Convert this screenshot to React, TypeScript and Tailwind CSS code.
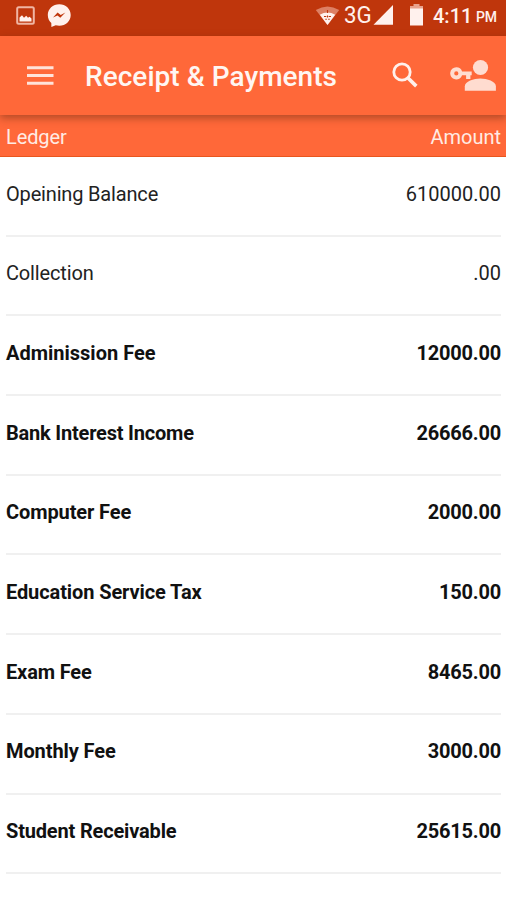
const rows = [
  { ledger: "Opeining Balance", amount: "610000.00", bold: false, tracking: "tracking-[-0.17px]" },
  { ledger: "Collection", amount: ".00", bold: false, tracking: "tracking-[-0.15px]" },
  { ledger: "Adminission Fee", amount: "12000.00", bold: true, tracking: "tracking-normal" },
  { ledger: "Bank Interest Income", amount: "26666.00", bold: true, tracking: "tracking-[-0.2px]" },
  { ledger: "Computer Fee", amount: "2000.00", bold: true, tracking: "tracking-[-0.1px]" },
  { ledger: "Education Service Tax", amount: "150.00", bold: true, tracking: "tracking-[-0.1px]" },
  { ledger: "Exam Fee", amount: "8465.00", bold: true, tracking: "tracking-[-0.15px]" },
  { ledger: "Monthly Fee", amount: "3000.00", bold: true, tracking: "tracking-[-0.1px]" },
  { ledger: "Student Receivable", amount: "25615.00", bold: true, tracking: "tracking-[-0.17px]" },
];

function StatusBar() {
  return (
    <div className="flex h-9 items-start bg-[#bf360c] text-[#fff1ed]">
      <svg className="ml-4 mt-[6px] h-[19px] w-[19px]" viewBox="0 0 19 19">
        <rect x="1.200" y="1.200" width="16.600" height="16.600" rx="1.500" fill="none" stroke="#f0b5a3" strokeWidth="2" />
        <path d="M3.500 15.500v-4l2.500-2.300 2 2.600 2.200-2 1.800 2 1.500-1 2 1.700v3z" fill="#fff1ed" />
      </svg>
      <svg className="ml-3 mt-1 h-[24px] w-[24px]" viewBox="0 0 24 24">
        <path d="M12.300.2C5.900.2.8 4.900.8 10.900c0 3.700 1.500 6.300 3.500 8.100l.1 4 4.300-1.800c1.200.3 2.300.5 3.600.5 6.400 0 11.400-4.800 11.400-10.800S18.700.2 12.300.2z" fill="#fff1ed" />
        <path d="M6 13.500l4.600-4.900 3.100 2.300 4.700-2.300-5.100 5.100-2.800-2.200z" fill="#bf360c" />
      </svg>
      <svg className="ml-[244px] mt-[6px] h-[20px] w-[26px]" viewBox="0 0 26 20">
        <path d="M.8 4Q12.500-3.200 24.200 4L12.500 19z" fill="#dd8064" />
        <path d="M4.800 8.800Q12.500 4.200 20.200 8.800L12.500 19z" fill="#fff1ed" />
        <path d="M12.500 4v3M9 10.500h2.300M13.700 10.500H16M12.500 9.500v2M10.300 13.300h1.500M13.200 13.300h1.500" stroke="#bf360c" strokeWidth="1.100" fill="none" />
      </svg>
      <span className="ml-[3px] mt-[3px] w-[27px] origin-left scale-x-[0.93] text-[24px] leading-6 font-normal">3G</span>
      <svg className="ml-0.5 mt-1 h-[21px] w-[21px]" viewBox="0 0 21 21">
        <path d="M.5 20.800L20 1v19.800z" fill="#fff1ed" />
      </svg>
      <svg className="ml-[15px] mt-1 h-[22px] w-[15px]" viewBox="0 0 15 22">
        <path d="M4.500 0h6v2H14v3H1V2h3.500z" fill="#e9a28d" />
        <path d="M1 4.500h13v17H1z" fill="#fff1ed" />
      </svg>
      <span className="ml-[9px] mt-1 w-[39px] text-[20px] leading-6 font-medium">4:11</span>
      <span className="ml-1 mt-[7px] text-[14px] leading-5 font-medium tracking-[-0.3px]">PM</span>
    </div>
  );
}

function AppBar() {
  return (
    <header className="relative z-10 flex h-[79px] items-center bg-[#ff6839] text-[#fff6f2] shadow-[0_3px_8px_rgba(80,35,15,0.45)]">
      <svg className="ml-[27px] h-[20px] w-[27px]" viewBox="0 0 27 20">
        <path d="M0 1.700h26.500M0 9.500h26.500M0 17.300h26.500" stroke="#ffe3da" strokeWidth="3" />
      </svg>
      <h1 className="ml-[31px] mt-[2px] flex-1 whitespace-nowrap text-[28px] leading-8 font-medium tracking-[0.04px]">Receipt &amp; Payments</h1>
      <svg className="mr-[31px] mb-px h-[26px] w-[27px]" viewBox="0 0 27 26">
        <circle cx="10" cy="10" r="8.200" fill="none" stroke="#fff0eb" strokeWidth="2.800" />
        <path d="M15.500 15.500l8.800 8.600" stroke="#fff0eb" strokeWidth="3.600" />
      </svg>
      <svg className="mr-[9px] h-[33px] w-[47px]" viewBox="0 0 47 33">
        <g fill="#ffdcd0">
          <circle cx="30.500" cy="8.500" r="7.600" />
          <path d="M14.800 31.800v-4.500c0-5 9-7.800 15.600-7.800s15.500 2.800 15.500 7.800v4.500z" />
          <path fillRule="evenodd" d="M6.300 8.300a6.100 6.100 0 1 0 5.800 8h4v3.800h4.300v-3.800h1.300v-3.900h-9.600a6.100 6.100 0 0 0-5.800-4.100zm0 4a2.100 2.100 0 1 1 0 4.200 2.100 2.100 0 0 1 0-4.200z" />
        </g>
      </svg>
    </header>
  );
}

export default function App() {
  return (
    <div className="h-[900px] w-[506px] overflow-hidden bg-white font-['Roboto',sans-serif]">
      <StatusBar />
      <AppBar />
      <div className="flex h-[42px] items-center justify-between border-b border-[#e8561e] bg-[#ff6839] pl-[6px] pr-[5px] pt-[3px] text-[20px] text-[#ffebe4]">
        <span className="tracking-[-0.1px]">Ledger</span>
        <span>Amount</span>
      </div>
      <main className="pl-[6px] pr-[5px]">
        {rows.map((row) => (
          <div
            key={row.ledger}
            className={`flex h-[79.700px] justify-between border-b-2 border-[#f0f0f0] pt-[24.500px] text-[20px] leading-6 ${row.bold ? "font-bold text-[#111]" : "font-normal text-[#222]"}`}
          >
            <span className={row.tracking}>{row.ledger}</span>
            <span className={row.bold ? "tracking-[-0.2px]" : "tracking-normal"}>{row.amount}</span>
          </div>
        ))}
      </main>
    </div>
  );
}
